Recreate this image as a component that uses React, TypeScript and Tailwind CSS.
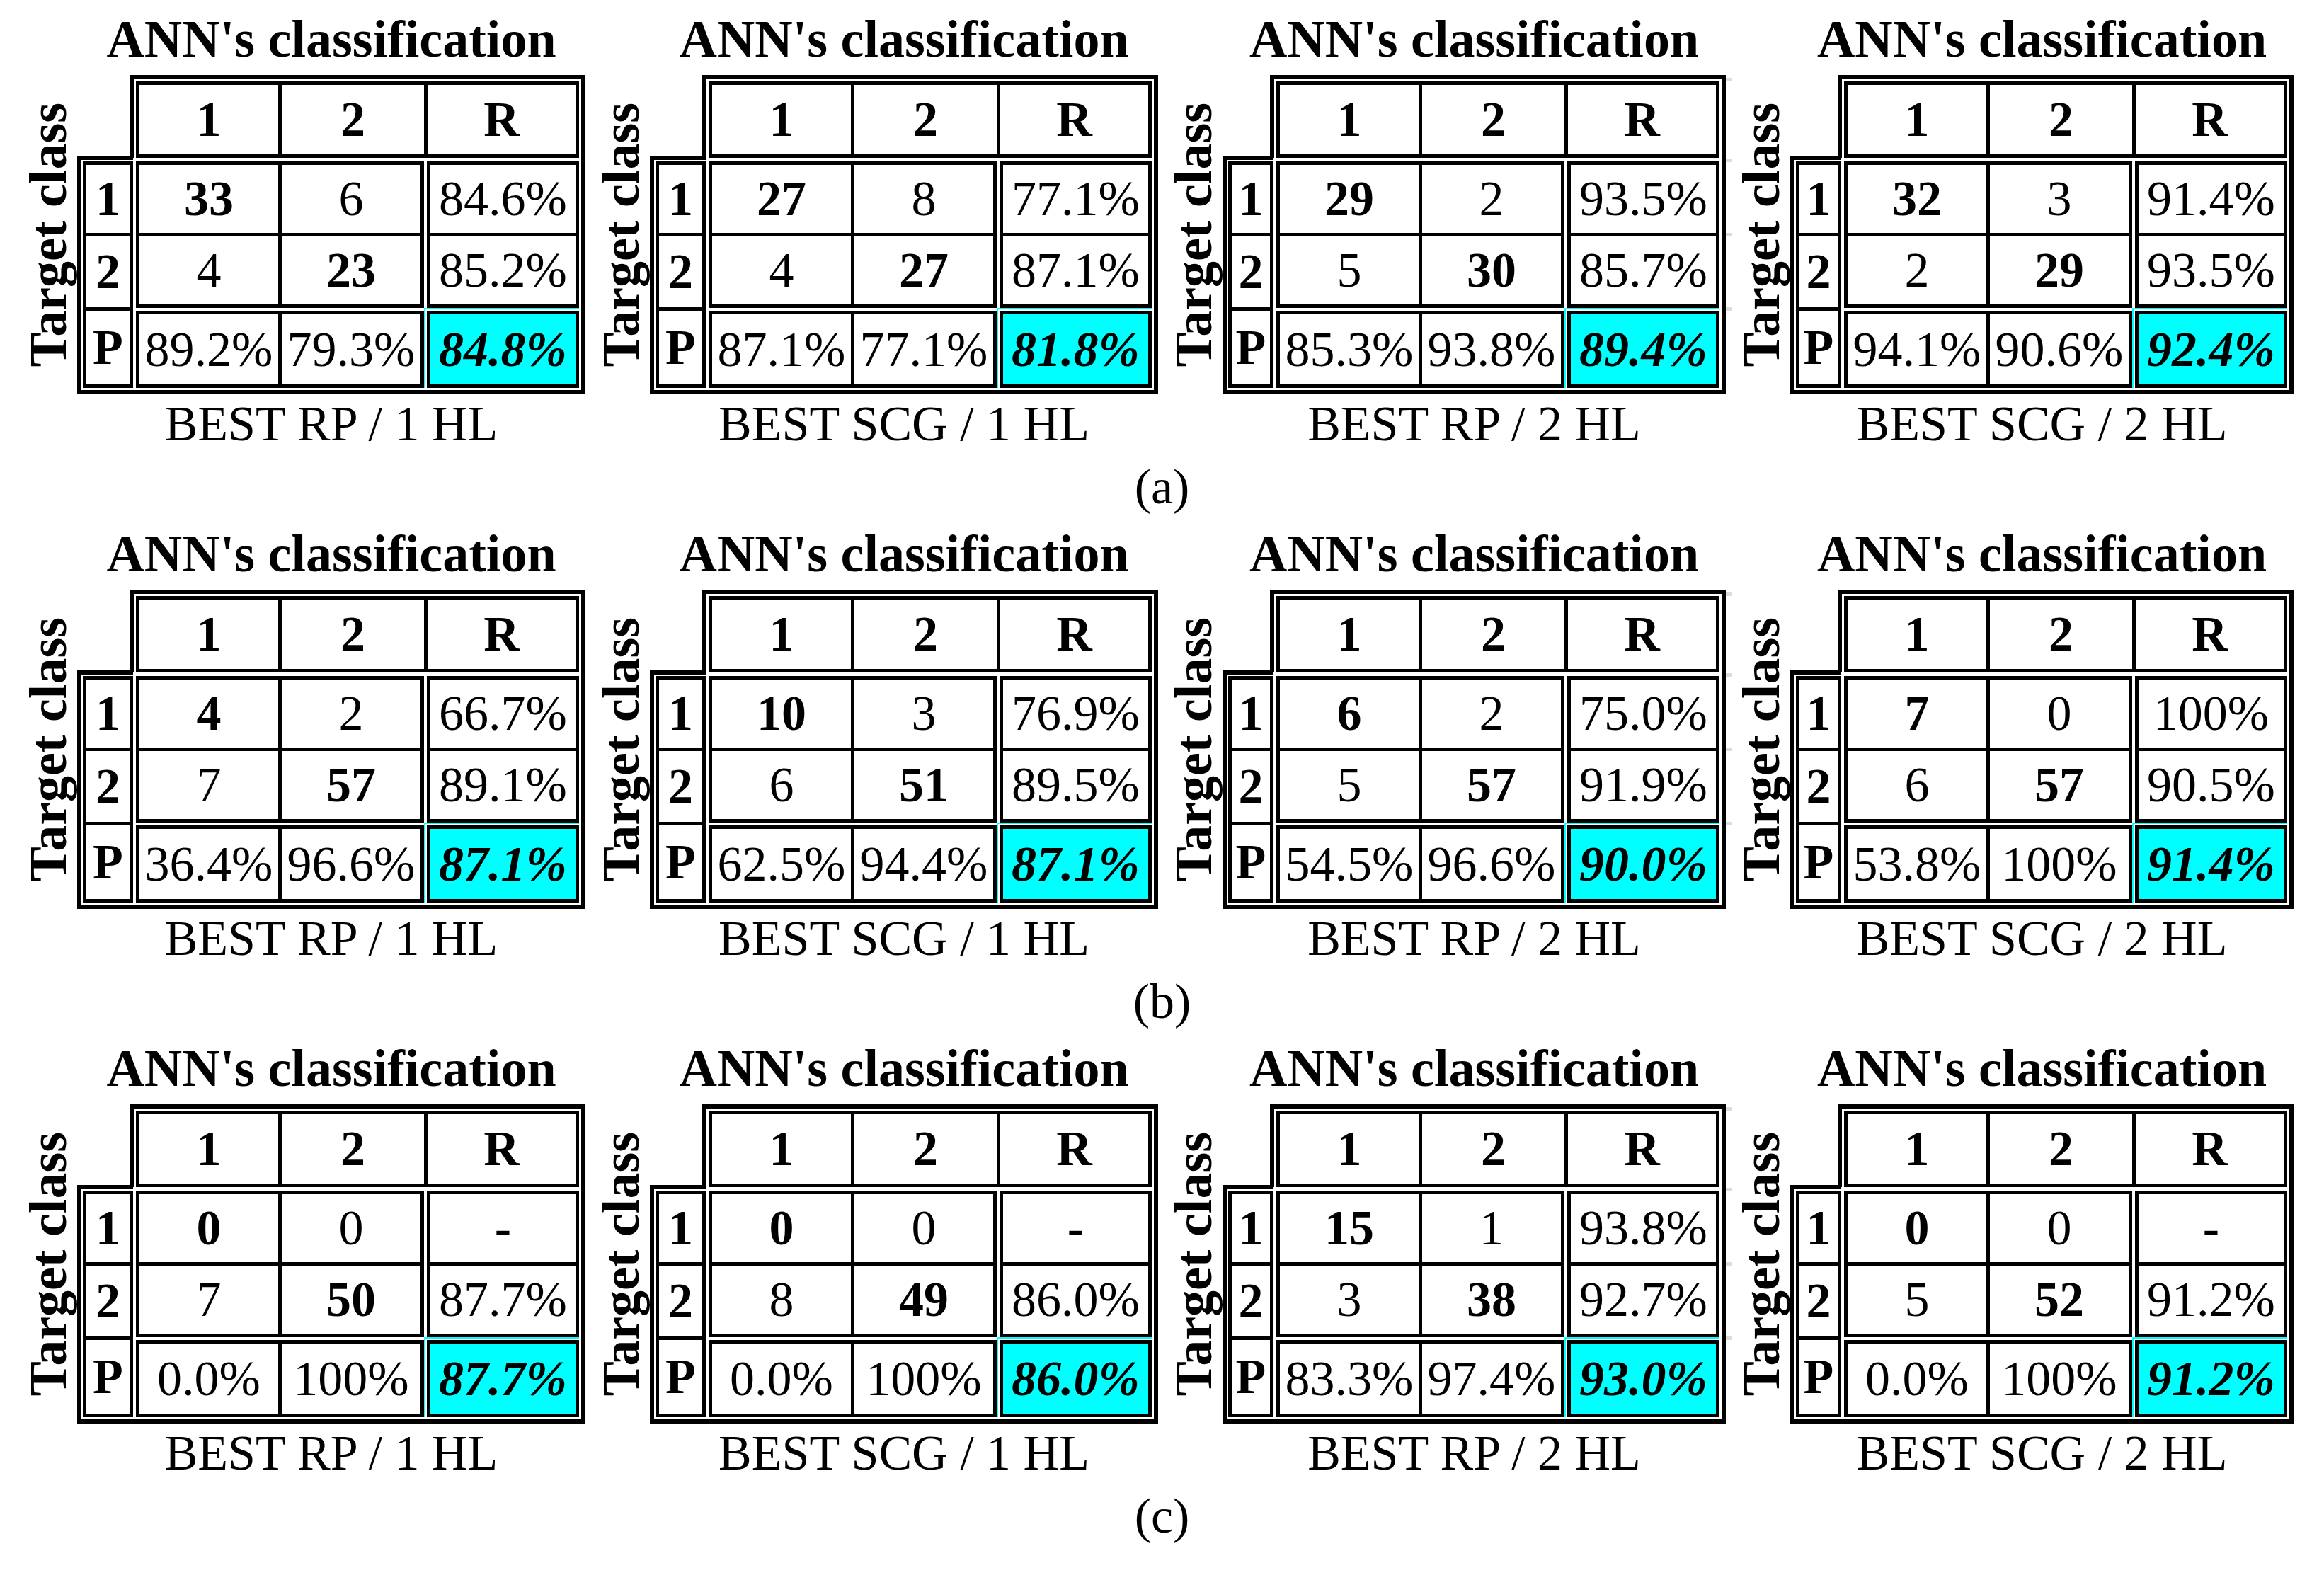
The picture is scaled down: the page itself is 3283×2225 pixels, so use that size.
import React from "react";

type Mat = {
  n: string;
  a: [string, string, string];
  b: [string, string, string];
  p: [string, string, string];
};

const rows: Mat[][] = [
  [
    { n: "BEST RP / 1 HL", a: ["33", "6", "84.6%"], b: ["4", "23", "85.2%"], p: ["89.2%", "79.3%", "84.8%"] },
    { n: "BEST SCG / 1 HL", a: ["27", "8", "77.1%"], b: ["4", "27", "87.1%"], p: ["87.1%", "77.1%", "81.8%"] },
    { n: "BEST RP / 2 HL", a: ["29", "2", "93.5%"], b: ["5", "30", "85.7%"], p: ["85.3%", "93.8%", "89.4%"] },
    { n: "BEST SCG / 2 HL", a: ["32", "3", "91.4%"], b: ["2", "29", "93.5%"], p: ["94.1%", "90.6%", "92.4%"] },
  ],
  [
    { n: "BEST RP / 1 HL", a: ["4", "2", "66.7%"], b: ["7", "57", "89.1%"], p: ["36.4%", "96.6%", "87.1%"] },
    { n: "BEST SCG / 1 HL", a: ["10", "3", "76.9%"], b: ["6", "51", "89.5%"], p: ["62.5%", "94.4%", "87.1%"] },
    { n: "BEST RP / 2 HL", a: ["6", "2", "75.0%"], b: ["5", "57", "91.9%"], p: ["54.5%", "96.6%", "90.0%"] },
    { n: "BEST SCG / 2 HL", a: ["7", "0", "100%"], b: ["6", "57", "90.5%"], p: ["53.8%", "100%", "91.4%"] },
  ],
  [
    { n: "BEST RP / 1 HL", a: ["0", "0", "-"], b: ["7", "50", "87.7%"], p: ["0.0%", "100%", "87.7%"] },
    { n: "BEST SCG / 1 HL", a: ["0", "0", "-"], b: ["8", "49", "86.0%"], p: ["0.0%", "100%", "86.0%"] },
    { n: "BEST RP / 2 HL", a: ["15", "1", "93.8%"], b: ["3", "38", "92.7%"], p: ["83.3%", "97.4%", "93.0%"] },
    { n: "BEST SCG / 2 HL", a: ["0", "0", "-"], b: ["5", "52", "91.2%"], p: ["0.0%", "100%", "91.2%"] },
  ],
];

const captions = ["(a)", "(b)", "(c)"];

function Matrix({ m, narrow, ticks }: { m: Mat; narrow: boolean; ticks: boolean }) {
  return (
    <div className="flex flex-col shrink-0">
      <div className="pl-[78px] h-[74px] text-center text-[74px] leading-none font-bold whitespace-nowrap">
        ANN's classification
      </div>
      <div className="mt-[14px] flex items-center">
        <div className="w-[78px] h-[451px] shrink-0 flex items-center justify-start">
          <div className="[writing-mode:vertical-rl] rotate-180 text-[74px] leading-none font-bold whitespace-nowrap">
            Target class
          </div>
        </div>
        <div className="relative flex flex-col">
          {/* header row */}
          <div className="flex">
            <div className={narrow ? "w-[67px] shrink-0" : "w-[74px] shrink-0"} />
            <div className="border-t-[6px] border-x-[6px] border-black pt-[3px] px-[3px] -mb-[3px]">
              <div className="w-[626px] h-[108px] border-[5px] border-black flex text-[70px] leading-none font-bold">
                <div className="w-[196px] flex items-center justify-center">1</div>
                <div className="w-[206px] border-l-[5px] border-black flex items-center justify-center">2</div>
                <div className="w-[214px] border-l-[5px] border-black flex items-center justify-center">R</div>
              </div>
            </div>
          </div>
          {/* body row */}
          <div className="flex">
            <div className="border-t-[6px] border-l-[6px] border-b-[6px] border-black pt-[2px] pl-[2px] pb-[3px]">
              <div
                className={
                  (narrow ? "w-[64px] " : "w-[71px] ") +
                  "h-[320px] border-[5px] border-black flex flex-col text-[70px] leading-none font-bold"
                }
              >
                <div className="h-[96px] flex items-center justify-center">1</div>
                <div className="h-[105px] border-t-[5px] border-black flex items-center justify-center">2</div>
                <div className="h-[109px] border-t-[5px] border-black flex items-center justify-center">P</div>
              </div>
            </div>
            <div className="border-r-[6px] border-b-[6px] border-black pt-[8px] pl-[4px] pr-[3px] pb-[3px] flex flex-col text-[70px] leading-none">
              <div className="flex gap-[4px]">
                <div className="w-[407px] h-[207px] border-[5px] border-black flex flex-col">
                  <div className="h-[96px] flex">
                    <div className="w-[196px] flex items-center justify-center font-bold">{m.a[0]}</div>
                    <div className="w-[201px] border-l-[5px] border-black flex items-center justify-center">{m.a[1]}</div>
                  </div>
                  <div className="h-[101px] border-t-[5px] border-black flex">
                    <div className="w-[196px] flex items-center justify-center">{m.b[0]}</div>
                    <div className="w-[201px] border-l-[5px] border-black flex items-center justify-center font-bold">{m.b[1]}</div>
                  </div>
                </div>
                <div className="w-[215px] h-[207px] border-[5px] border-black flex flex-col">
                  <div className="h-[96px] flex items-center justify-center">{m.a[2]}</div>
                  <div className="h-[101px] border-t-[5px] border-black flex items-center justify-center">{m.b[2]}</div>
                </div>
              </div>
              <div className="flex">
                <div className="mt-[4px] w-[407px] h-[109px] border-[5px] border-black flex">
                  <div className="w-[196px] flex items-center justify-center">{m.p[0]}</div>
                  <div className="w-[201px] border-l-[5px] border-black flex items-center justify-center">{m.p[1]}</div>
                </div>
                <div className="border-t-2 border-l-2 border-[#00ffff] pt-[2px] pl-[2px]">
                  <div className="w-[215px] h-[109px] border-[5px] border-black bg-[#00ffff] flex items-center justify-center font-bold italic">
                    {m.p[2]}
                  </div>
                </div>
              </div>
            </div>
          </div>
          {ticks && (
            <>
              <div className="absolute left-full top-[4px] w-[9px] h-[5px] bg-[#dcdcdc]" />
              <div className="absolute left-full top-[118px] w-[9px] h-[5px] bg-[#dcdcdc]" />
              <div className="absolute left-full top-[223px] w-[9px] h-[5px] bg-[#dcdcdc]" />
              <div className="absolute left-full top-[328px] w-[9px] h-[5px] bg-[#dcdcdc]" />
            </>
          )}
        </div>
      </div>
      <div className="mt-[7px] pl-[78px] text-center text-[70px] leading-none whitespace-nowrap">{m.n}</div>
    </div>
  );
}

export default function App() {
  return (
    <div className="w-[3283px] h-[2225px] bg-white text-black overflow-hidden font-['Liberation_Serif','Times_New_Roman',serif]">
      {rows.map((r, ri) => (
        <div key={ri} className="h-[727px] pt-[18px] flex flex-col">
          <div className="flex gap-[13px] pl-[31px]">
            {r.map((m, mi) => (
              <Matrix key={mi} m={m} narrow={mi >= 2} ticks={mi === 2} />
            ))}
          </div>
          <div className="mt-[19px] text-center text-[70px] leading-none">{captions[ri]}</div>
        </div>
      ))}
    </div>
  );
}
